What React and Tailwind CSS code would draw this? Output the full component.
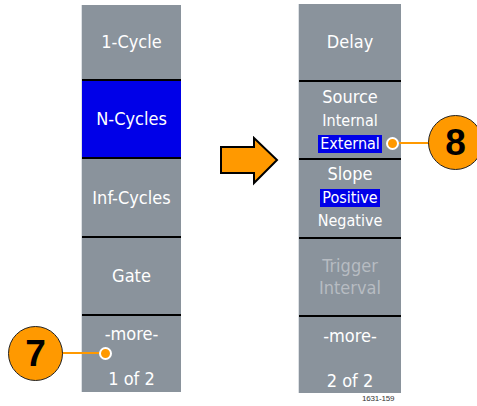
export default function App() {
  const font = { fontFamily: '"DejaVu Sans Condensed", "DejaVu Sans", sans-serif' };
  return (
    <div className="relative w-[477px] h-[406px] bg-white overflow-hidden" style={font}>
      <div className="flex items-start">
        {/* Left panel */}
        <div className="ml-[81px] mt-[5px] w-[100px] flex flex-col bg-[#8a939c] border-l border-[#dde1e5] text-white text-[18px] leading-none">
          <div className="h-[76px] flex items-center justify-center border-b-2 border-black">1-Cycle</div>
          <div className="h-[78px] flex items-center justify-center border-b-2 border-black bg-[#0000e8]">N-Cycles</div>
          <div className="h-[79px] flex items-center justify-center border-b-2 border-black">Inf-Cycles</div>
          <div className="h-[78px] flex items-center justify-center border-b-2 border-black">Gate</div>
          <div className="h-[76px] flex flex-col items-center pt-[9px]">
            <span>-more-</span>
            <span className="mt-[27px]">1 of 2</span>
          </div>
        </div>

        {/* Arrow */}
        <svg className="ml-[39px] mt-[136px]" width="60" height="50" viewBox="0 0 60 50">
          <polygon points="1,11 34,11 34,2 57,24 34,47 34,37 1,37" fill="#ff9900" stroke="#000" strokeWidth="2" strokeLinejoin="miter" />
        </svg>

        {/* Right panel */}
        <div className="ml-[18px] mt-[4px] w-[103px] flex flex-col bg-[#8a939c] border-l border-[#dde1e5] text-white text-[18px] leading-none">
          <div className="h-[78px] flex items-center justify-center border-b-2 border-black">Delay</div>
          <div className="h-[78px] flex flex-col items-center pt-[6px] border-b-2 border-black">
            <span className="text-[18px]">Source</span>
            <span className="mt-[7px] text-[16px]">Internal</span>
            <span className="mt-[6px] text-[16px] bg-[#0000e8] px-[2px] py-[1px]">External</span>
          </div>
          <div className="h-[79px] flex flex-col items-center pt-[5px] border-b-2 border-black">
            <span className="text-[18px]">Slope</span>
            <span className="mt-[6px] text-[16px] bg-[#0000e8] px-[2px] py-[1px]">Positive</span>
            <span className="mt-[6px] text-[16px]">Negative</span>
          </div>
          <div className="h-[78px] flex flex-col items-center justify-center border-b-2 border-black text-[#b7bcc2] text-[18px]">
            <span>Trigger</span>
            <span className="mt-[4px]">Interval</span>
          </div>
          <div className="h-[76px] flex flex-col items-center pt-[10px]">
            <span>-more-</span>
            <span className="mt-[27px]">2 of 2</span>
          </div>
        </div>
      </div>

      <div className="absolute left-[362px] top-[393px] text-[8px] text-[#333] tracking-tight" style={{ fontFamily: '"Liberation Sans", sans-serif' }}>1631-159</div>

      {/* Callout 7 */}
      <div className="absolute left-[62px] top-[352px] w-[42px] h-[2px] bg-[#ff9900]" />
      <div className="absolute left-[99px] top-[347px] w-[13px] h-[13px] rounded-full bg-[#ff9900] border-2 border-white" />
      <div className="absolute left-[8px] top-[326px] w-[55px] h-[55px] rounded-full bg-[#ff9900] border-[1.5px] border-[#222] flex items-center justify-center text-black font-bold text-[37px] leading-none" style={{ fontFamily: '"Liberation Sans", sans-serif' }}>7</div>

      {/* Callout 8 */}
      <div className="absolute left-[396px] top-[142px] w-[34px] h-[2px] bg-[#ff9900]" />
      <div className="absolute left-[386px] top-[137px] w-[13px] h-[13px] rounded-full bg-[#ff9900] border-2 border-white" />
      <div className="absolute left-[428px] top-[115px] w-[55px] h-[55px] rounded-full bg-[#ff9900] border-[1.5px] border-[#222] flex items-center justify-center text-black font-bold text-[37px] leading-none" style={{ fontFamily: '"Liberation Sans", sans-serif' }}>8</div>
    </div>
  );
}
